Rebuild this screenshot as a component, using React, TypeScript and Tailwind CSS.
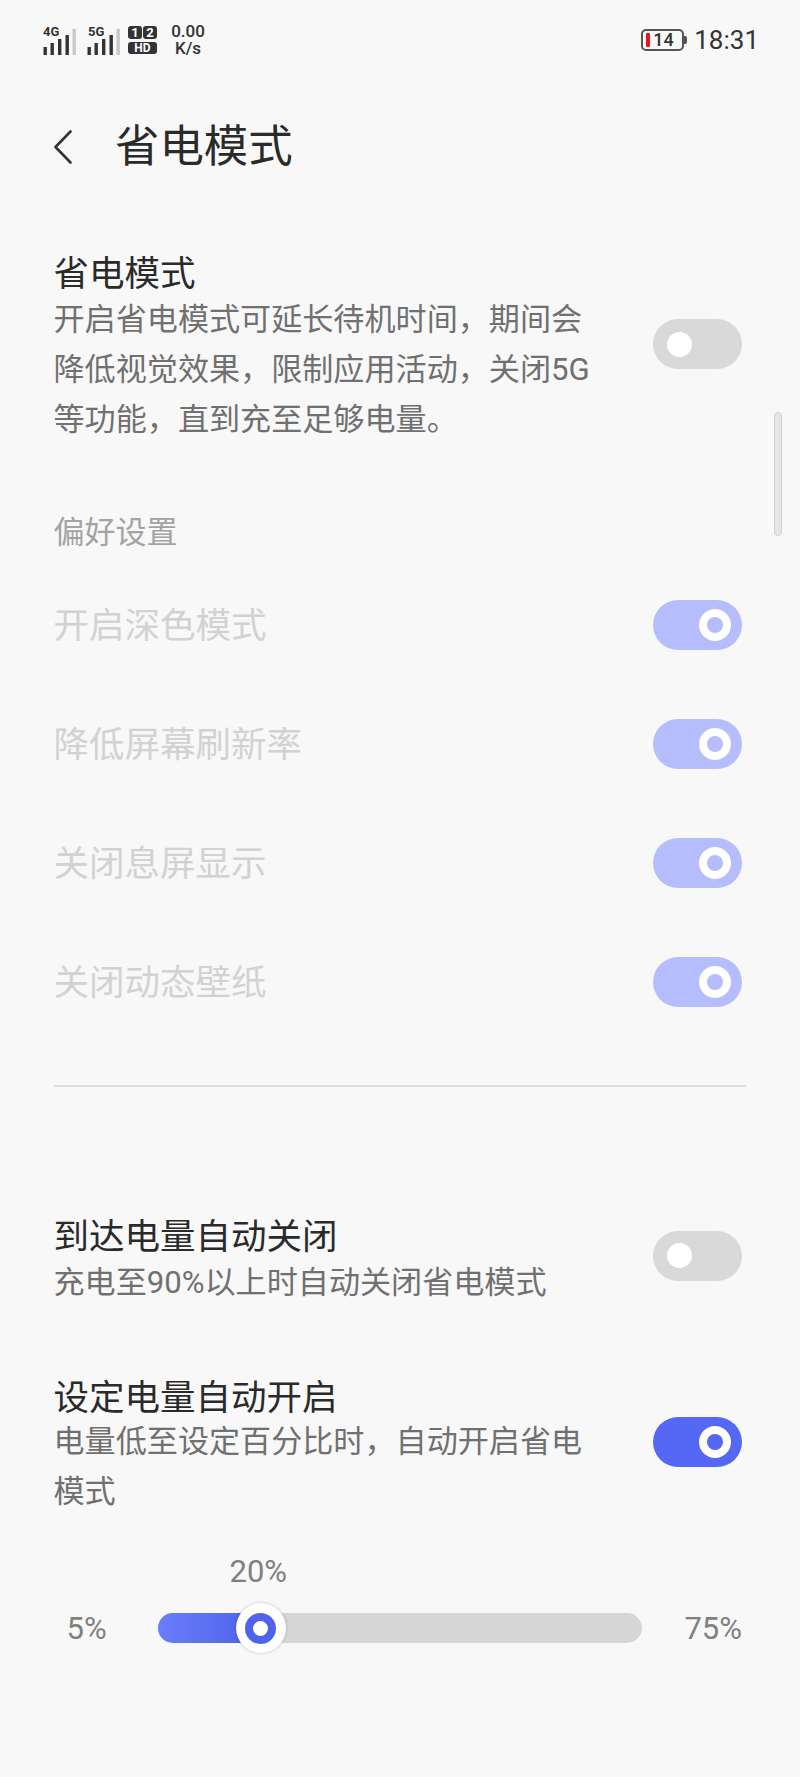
const font = "font-['Roboto','Noto_Sans_CJK_SC',sans-serif]";

function Toggle({ state, className = "" }: { state: "off" | "dim" | "on"; className?: string }) {
  if (state === "off") {
    return (
      <div className={`flex h-[50px] w-[89px] shrink-0 items-center rounded-full bg-[#d9d9d9] pl-[14px] ${className}`}>
        <div className="h-[25px] w-[25px] rounded-full bg-white" />
      </div>
    );
  }
  const dim = state === "dim";
  return (
    <div className={`flex h-[50px] w-[89px] shrink-0 items-center justify-end rounded-full pr-[11px] ${dim ? "bg-[#b6bdfc]" : "bg-[#5468f5]"} ${className}`}>
      <div className="flex h-[32px] w-[32px] items-center justify-center rounded-full bg-white">
        <div className={`h-[16px] w-[16px] rounded-full ${dim ? "bg-[#b6bdfc]" : "bg-[#5468f5]"}`} />
      </div>
    </div>
  );
}

function Signal({ label, left }: { label: string; left: number }) {
  return (
    <div className="relative h-[30px] w-[33px]">
      <span className="absolute top-[1px] text-[13px] font-bold leading-[12px] text-[#333]" style={{ left }}>{label}</span>
      <svg width="33" height="30" viewBox="0 0 33 30" className="absolute left-0 top-0">
        <rect x="0.5" y="22" width="3.4" height="8" fill="#333" />
        <rect x="7.5" y="18" width="3.4" height="12" fill="#333" />
        <rect x="15" y="14" width="3.4" height="16" fill="#333" />
        <rect x="22.5" y="10" width="3.4" height="20" fill="#333" />
        <rect x="29.5" y="4" width="3.4" height="26" fill="#c9c9c9" />
      </svg>
    </div>
  );
}

function StatusBar() {
  return (
    <div className="flex h-[80px] items-center justify-between pl-[43px] pr-[41px]">
      <div className="flex items-center">
        <Signal label="4G" left={0} />
        <div className="w-[11px]" />
        <Signal label="5G" left={1} />
        <div className="ml-[8px] flex w-[29px] flex-col gap-[3px]">
          <div className="flex justify-between">
            <div className="flex h-[13px] w-[14px] items-center justify-center rounded-[3px] bg-[#333] text-[13px] font-bold leading-none text-white">1</div>
            <div className="flex h-[13px] w-[14px] items-center justify-center rounded-[3px] bg-[#333] text-[13px] font-bold leading-none text-white">2</div>
          </div>
          <div className="flex h-[12px] w-[29px] items-center justify-center rounded-[3px] bg-[#333] text-[12px] font-bold leading-none text-white">HD</div>
        </div>
        <div className="ml-[12px] flex w-[38px] flex-col items-center text-[17px] font-medium leading-[17px] text-[#333]">
          <span>0.00</span>
          <span>K/s</span>
        </div>
      </div>
      <div className="flex items-center">
        <div className="flex h-[22px] w-[43px] items-center rounded-[5px] border-2 border-[#555] pl-[3px]">
          <div className="h-[14px] w-[4px] rounded-[1px] bg-[#e8141c]" />
          <span className="ml-[3px] text-[18px] font-medium leading-none text-[#333]">14</span>
        </div>
        <div className="h-[8px] w-[3px] rounded-r-[2px] bg-[#555]" />
        <span className="ml-[7px] text-[26px] leading-none text-[#333]">18:31</span>
      </div>
    </div>
  );
}

function DimRow({ text, mt }: { text: string; mt: string }) {
  return (
    <div className={`flex h-[50px] items-center justify-between ${mt}`}>
      <span className="pt-[3px] text-[35.5px] leading-[50px] text-[#d2d2d2]">{text}</span>
      <Toggle state="dim" />
    </div>
  );
}

export default function App() {
  return (
    <div className={`relative h-[1777px] w-[800px] overflow-hidden bg-[#f8f8f8] ${font}`}>
      <StatusBar />
      <div className="mt-[32px] flex h-[70px] items-center pl-[54px]">
        <svg width="18" height="34" viewBox="0 0 18 34" fill="none" stroke="#333" strokeWidth="2.6" strokeLinecap="round" strokeLinejoin="round">
          <path d="M16.5 1.5 L1.5 17 L16.5 32.5" />
        </svg>
        <h1 className="ml-[43px] text-[44.4px] font-normal leading-[60px] text-[#2a2a2a]">省电模式</h1>
      </div>

      <div className="pl-[53.5px] pr-[58px]">
        <div className="mt-[71px] flex items-start justify-between">
          <div className="w-[540px]">
            <div className="text-[35.5px] leading-[42px] text-[#2a2a2a]">省电模式</div>
            <div className="text-[31.1px] leading-[50px] text-[#707070]">
              开启省电模式可延长待机时间，期间会<br />
              降低视觉效果，限制应用活动，关闭5G<br />
              等功能，直到充至足够电量。
            </div>
          </div>
          <Toggle state="off" className="mt-[66px]" />
        </div>

        <div className="mt-[62.5px] text-[31px] leading-[50px] text-[#a3a3a3]">偏好设置</div>
        <DimRow text="开启深色模式" mt="mt-[42px]" />
        <DimRow text="降低屏幕刷新率" mt="mt-[69px]" />
        <DimRow text="关闭息屏显示" mt="mt-[69px]" />
        <DimRow text="关闭动态壁纸" mt="mt-[69px]" />

        <div className="-mr-[4px] mt-[78px] h-[2px] bg-[#dddddd]" />

        <div className="mt-[127px] flex items-start justify-between">
          <div>
            <div className="text-[35.5px] leading-[46px] text-[#2a2a2a]">到达电量自动关闭</div>
            <div className="text-[31.1px] leading-[45px] text-[#707070]">充电至90%以上时自动关闭省电模式</div>
          </div>
          <Toggle state="off" className="mt-[17px]" />
        </div>

        <div className="mt-[75.5px] flex items-start justify-between">
          <div className="w-[540px]">
            <div className="text-[35.5px] leading-[37px] text-[#2a2a2a]">设定电量自动开启</div>
            <div className="text-[31.1px] leading-[50px] text-[#707070]">
              电量低至设定百分比时，自动开启省电<br />模式
            </div>
          </div>
          <Toggle state="on" className="mt-[37px]" />
        </div>

        <div className="relative mt-[29px] h-[100px]">
          <span className="absolute left-[176px] top-[1px] text-[31px] leading-[50px] text-[#808080]">20%</span>
          <div className="absolute left-[13px] top-[60px] text-[31px] leading-[45px] text-[#808080]">5%</div>
          <div className="absolute right-[0px] top-[60px] text-[31px] leading-[45px] text-[#808080]">75%</div>
          <div className="absolute left-[104px] top-[67px] h-[30px] w-[484px] rounded-full bg-[#d6d6d6]" />
          <div className="absolute left-[104px] top-[67px] h-[30px] w-[110px] rounded-l-full bg-gradient-to-r from-[#6a7dfb] to-[#4a5fe8]" />
          <div className="absolute left-[182px] top-[57px] flex h-[50px] w-[50px] items-center justify-center rounded-full bg-white shadow-[0_0_3px_rgba(0,0,0,0.25)]">
            <div className="flex h-[31px] w-[31px] items-center justify-center rounded-full bg-[#4f63ea]">
              <div className="h-[15px] w-[15px] rounded-full bg-white" />
            </div>
          </div>
        </div>
      </div>

      <div className="absolute left-[774px] top-[412px] h-[124px] w-[8px] rounded-full border border-[#d2d2d2] bg-[#e6e6e6]" />
    </div>
  );
}
